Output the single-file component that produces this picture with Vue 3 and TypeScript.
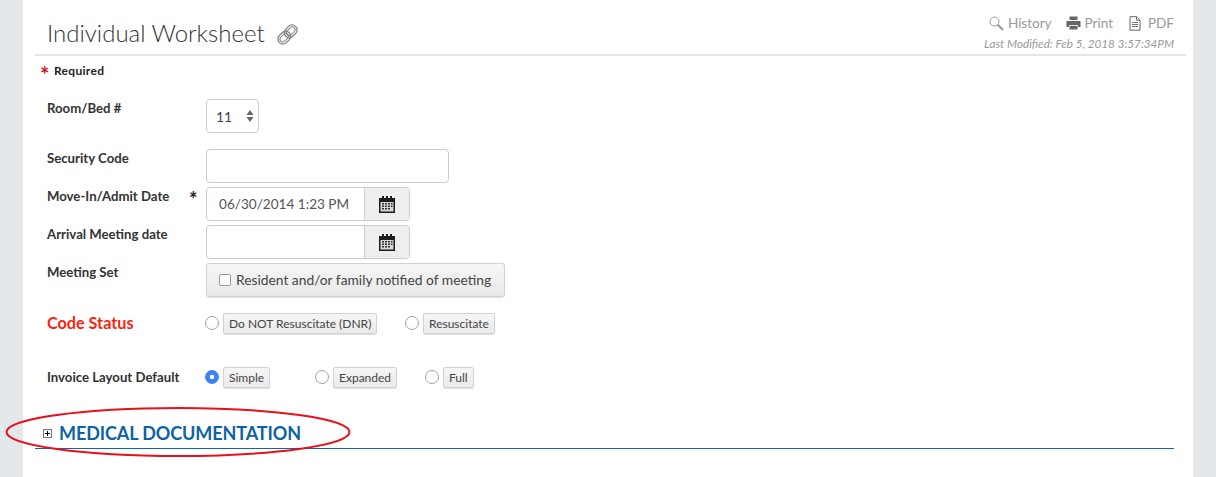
<template>
  <div class="page">
    <div class="sheet">
      <header class="head">
        <h1 class="title">
          Individual Worksheet
          <svg class="clip" width="23" height="23" viewBox="0 0 23 23" fill="none" stroke="#858585" stroke-width="1.300">
            <g transform="rotate(-45 11.500 11.500)">
              <rect x="0" y="6.500" width="14" height="10" rx="5" />
              <rect x="9" y="6.500" width="14" height="10" rx="5" />
              <rect x="2" y="8.700" width="10" height="5.600" rx="2.800" stroke-width="1" />
              <rect x="11" y="8.700" width="10" height="5.600" rx="2.800" stroke-width="1" />
            </g>
          </svg>
        </h1>
        <div class="tools">
          <div class="links">
            <span class="link">
              <svg width="15" height="15" viewBox="0 0 15 15" fill="none" stroke="#999">
                <circle cx="5.500" cy="5.500" r="4.500" stroke-width="1" />
                <path d="M8.800 8.800l5.200 5.200" stroke-width="2" />
              </svg>
              History
            </span>
            <span class="link">
              <svg width="15" height="14" viewBox="0 0 15 14" fill="#666">
                <path d="M3.500 0.500h8v3.500h-8z" />
                <path d="M0.500 5h14v6h-2.500v-2h-9v2h-2.500z" />
                <path d="M3.500 9.800h8v3.700h-8z" />
              </svg>
              Print
            </span>
            <span class="link">
              <svg width="12" height="15" viewBox="0 0 12 15" fill="none" stroke="#666">
                <path d="M1 0.700h6.500l3.500 3.500v10h-10z" />
                <path d="M7.500 0.700v3.500h3.500M3 6.500h6M3 8.500h6M3 10.500h6" stroke-width="0.900" />
              </svg>
              PDF
            </span>
          </div>
          <div class="modified">Last Modified: Feb 5, 2018 3:57:34PM</div>
        </div>
      </header>

      <div class="required"><span class="star">*</span>Required</div>

      <div class="row room">
        <label class="lbl">Room/Bed #</label>
        <div class="select">
          <span>11</span>
          <svg width="8" height="14" viewBox="0 0 8 14" fill="#666">
            <path d="M4 1l3.500 5h-7zM4 13l-3.500-5h7z" />
          </svg>
        </div>
      </div>

      <div class="row security">
        <label class="lbl">Security Code</label>
        <div class="input wide"></div>
      </div>

      <div class="row">
        <label class="lbl">Move-In/Admit Date<span class="req">*</span></label>
        <div class="date">
          <div class="date-val">06/30/2014 1:23 PM</div>
          <div class="date-btn">
            <svg width="16" height="17" viewBox="0 0 16 17">
              <path fill="#1c1c1c" d="M0 2h16v15h-16z" />
              <path fill="#1c1c1c" d="M3 0h2v3h-2zM7 0h2v3h-2zM11 0h2v3h-2z" />
              <path fill="#d8d8d8" d="M1.500 6h13v9.500h-13z" />
              <path fill="#333" d="M3 7h2v1.500h-2zM6 7h2v1.500h-2zM9 7h2v1.500h-2zM12 7h1.500v1.500h-1.500zM3 9.500h2v1.500h-2zM6 9.500h2v1.500h-2zM9 9.500h2v1.500h-2zM12 9.500h1.500v1.500h-1.500zM3 12h2v1.500h-2zM6 12h2v1.500h-2zM9 12h2v1.500h-2z" />
            </svg>
          </div>
        </div>
      </div>

      <div class="row">
        <label class="lbl">Arrival Meeting date</label>
        <div class="date">
          <div class="date-val"></div>
          <div class="date-btn">
            <svg width="16" height="17" viewBox="0 0 16 17">
              <path fill="#1c1c1c" d="M0 2h16v15h-16z" />
              <path fill="#1c1c1c" d="M3 0h2v3h-2zM7 0h2v3h-2zM11 0h2v3h-2z" />
              <path fill="#d8d8d8" d="M1.500 6h13v9.500h-13z" />
              <path fill="#333" d="M3 7h2v1.500h-2zM6 7h2v1.500h-2zM9 7h2v1.500h-2zM12 7h1.500v1.500h-1.500zM3 9.500h2v1.500h-2zM6 9.500h2v1.500h-2zM9 9.500h2v1.500h-2zM12 9.500h1.500v1.500h-1.500zM3 12h2v1.500h-2zM6 12h2v1.500h-2zM9 12h2v1.500h-2z" />
            </svg>
          </div>
        </div>
      </div>

      <div class="row">
        <label class="lbl">Meeting Set</label>
        <div class="check-btn"><span class="box"></span>Resident and/or family notified of meeting</div>
      </div>

      <div class="row code">
        <label class="lbl red">Code Status</label>
        <div class="radios">
          <div v-for="o in codeOptions" :key="o.text" class="opt" :style="{ width: o.width + 'px' }">
            <span class="radio"></span><span class="tag">{{ o.text }}</span>
          </div>
        </div>
      </div>

      <div class="row invoice">
        <label class="lbl">Invoice Layout Default</label>
        <div class="radios">
          <div v-for="o in invoiceOptions" :key="o.text" class="opt" :style="{ width: o.width + 'px' }">
            <span class="radio" :class="{ on: o.on }"></span><span class="tag">{{ o.text }}</span>
          </div>
        </div>
      </div>

      <div class="section">
        <span class="plus"></span>
        <h2>MEDICAL DOCUMENTATION</h2>
      </div>

      <svg class="ring" width="346" height="52" viewBox="0 0 346 52" fill="none">
        <ellipse cx="173" cy="26" rx="171.500" ry="24" stroke="#e8101a" stroke-width="2" />
      </svg>
    </div>
  </div>
</template>

<script setup lang="ts">
const codeOptions = [
  { text: 'Do NOT Resuscitate (DNR)', width: 200 },
  { text: 'Resuscitate', width: 100 },
]

const invoiceOptions = [
  { text: 'Simple', width: 110, on: true },
  { text: 'Expanded', width: 110, on: false },
  { text: 'Full', width: 60, on: false },
]
</script>

<style>
html,
body {
  margin: 0;
  background: #e4e8eb;
}
</style>

<style scoped>
.page {
  height: 477px;
  overflow: hidden;
  padding: 0 23px;
  font-family: Lato, sans-serif;
  color: #333;
}

.sheet {
  position: relative;
  height: 477px;
  background: #fff;
  box-sizing: border-box;
  padding: 0 19px 0 12px;
}

.head {
  display: flex;
  justify-content: space-between;
  height: 54px;
  margin-right: -12px;
  padding: 0 12px;
  border-bottom: 2px solid #e2e6e9;
}

.title {
  margin: 17px 0 0;
  height: 32px;
  font-size: 24px;
  line-height: 32px;
  font-weight: 300;
  color: #333;
  display: flex;
  align-items: center;
  gap: 11px;
}

.clip {
  margin-top: 2px;
}

.tools {
  text-align: right;
  padding-top: 14px;
}

.links {
  display: flex;
  justify-content: flex-end;
  gap: 14px;
  font-size: 13.500px;
  line-height: 18px;
  color: #999;
}

.link {
  display: flex;
  align-items: center;
  gap: 4px;
}

.link:last-child {
  gap: 7px;
  margin-left: 2px;
}

.modified {
  font-size: 11.700px;
  line-height: 14px;
  margin-top: 4px;
  font-style: italic;
  color: #999;
}

.required {
  display: flex;
  align-items: center;
  margin: 7px 0 0 5px;
  height: 16px;
  font-size: 12px;
  line-height: 16px;
  font-weight: 700;
  letter-spacing: 0.300px;
  color: #222;
}

.star {
  width: 14px;
  color: #c8161d;
  font-size: 22px;
  line-height: 16px;
  padding-top: 8px;
}

.row {
  display: flex;
  align-items: flex-start;
  margin-top: 4px;
}

.room {
  margin-top: 20px;
}

.security {
  margin-top: 16px;
}

.lbl {
  position: relative;
  flex: none;
  width: 159px;
  margin-left: 12px;
  font-size: 13.200px;
  line-height: 18px;
  font-weight: 700;
  color: #333;
}

.req {
  position: absolute;
  left: 142px;
  top: 3px;
  font-size: 20px;
  color: #222;
}

.select {
  width: 53px;
  height: 34px;
  box-sizing: border-box;
  border: 1px solid #ccc;
  border-radius: 4px;
  display: flex;
  align-items: center;
  justify-content: space-between;
  padding: 0 4px 0 9px;
  font-size: 14px;
  color: #444;
}

.input {
  height: 34px;
  box-sizing: border-box;
  border: 1px solid #ccc;
  border-radius: 4px;
}

.wide {
  width: 243px;
}

.date {
  display: flex;
  width: 204px;
  height: 34px;
  box-sizing: border-box;
  border: 1px solid #ccc;
  border-radius: 4px;
  overflow: hidden;
}

.date-val {
  flex: 1;
  padding-left: 12px;
  font-size: 13.600px;
  line-height: 32px;
  color: #555;
}

.date-btn {
  width: 44px;
  flex: none;
  background: #eee;
  border-left: 1px solid #ccc;
  display: flex;
  align-items: center;
  justify-content: center;
}

.check-btn {
  width: 299px;
  height: 34px;
  box-sizing: border-box;
  border: 1px solid #d2d2d2;
  border-radius: 3px;
  background: linear-gradient(#f6f6f6, #e9e9e9);
  box-shadow: 0 1px 1px rgba(0, 0, 0, 0.12);
  display: flex;
  align-items: center;
  padding: 0 0 2px 12px;
  font-size: 13.800px;
  color: #444;
}

.box {
  width: 10px;
  height: 10px;
  margin: 2px 5px 0 0;
  border: 1px solid #9a9a9a;
  border-radius: 2px;
  background: #fff;
}

.code {
  margin-top: 15px;
  height: 22px;
  align-items: center;
}

.invoice {
  margin-top: 32px;
  height: 22px;
  align-items: center;
}

.red {
  font-size: 16.200px;
  color: #fb1f10;
}

.radios {
  display: flex;
  margin-left: -1px;
}

.opt {
  display: flex;
  align-items: center;
}

.radio {
  width: 12px;
  height: 12px;
  margin-right: 4px;
  border: 1px solid #a3a3a3;
  border-radius: 50%;
  background: #fff;
  flex: none;
}

.radio.on {
  border-color: #3b82f7;
  background: radial-gradient(circle, #fff 0 2px, #3b82f7 2.600px);
}

.tag {
  height: 21px;
  box-sizing: border-box;
  padding: 0 5px;
  border: 1px solid #d2d2d2;
  border-radius: 2px;
  background: linear-gradient(#f6f6f6, #eaeaea);
  box-shadow: 0 1px 1px rgba(0, 0, 0, 0.12);
  font-size: 12px;
  line-height: 19px;
  color: #444;
  white-space: nowrap;
}

.section {
  display: flex;
  align-items: center;
  height: 30px;
  margin-top: 30px;
  padding-left: 8px;
  border-bottom: 1px solid #0a66b0;
}

.section h2 {
  margin: 0 0 0 7px;
  font-size: 18px;
  line-height: 30px;
  font-weight: 700;
  color: #0b62a4;
  letter-spacing: -0.100px;
}

.plus {
  width: 7px;
  height: 7px;
  border: 1px solid #777;
  background:
    linear-gradient(#000, #000) center / 5px 1px no-repeat,
    linear-gradient(#000, #000) center / 1px 5px no-repeat,
    #fff;
}

.ring {
  position: absolute;
  left: -18px;
  top: 406px;
}
</style>
